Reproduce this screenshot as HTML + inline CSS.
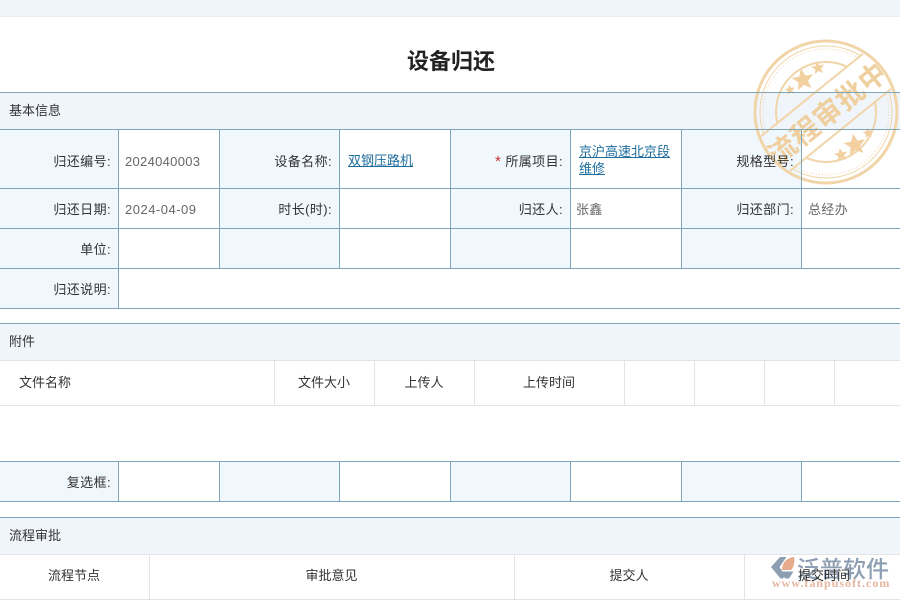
<!DOCTYPE html>
<html lang="zh"><head><meta charset="utf-8"><title>设备归还</title>
<style>
html,body{margin:0;padding:0;background:#fff}
#p{position:relative;width:900px;height:600px;overflow:hidden;background:#fff;font:13px/16px "Liberation Sans","Noto Sans CJK SC",sans-serif;color:#333}
#p div{position:absolute}
.b{background:#f0f7fd}
.s{background:#f0f5fc;left:0;width:900px}
.h{left:0;width:900px;height:1px;background:#7fa6b8}
.g{left:0;width:900px;height:1px;background:#e4e4e4}
.v{width:1px;background:#7fa6b8}
.w{width:1px;background:#e4e4e4}
.t,.r,.c,.d,.l{margin-top:1px}
.t{white-space:nowrap}
.r{white-space:nowrap;text-align:right;letter-spacing:.4px}
.c{white-space:nowrap;text-align:center}
.d{white-space:nowrap;color:#666;letter-spacing:.3px}
.l{color:#1d6d9c;text-decoration:underline;white-space:nowrap}
</style></head><body><div id="p">
<div class="s" style="top:0;height:16px"></div>
<div class="g" style="top:16px;background:#e8edf3"></div>
<div class="c" style="left:0;width:902px;top:46px;font-size:22px;line-height:30px;font-weight:bold;color:#222">设备归还</div>

<!-- basic section -->
<div class="s" style="top:93px;height:36px"></div>
<div class="t" style="left:9px;top:102px">基本信息</div>

<!-- label cell backgrounds -->
<div class="b" style="left:0;top:130px;width:118px;height:178px"></div>
<div class="b" style="left:220px;top:130px;width:119px;height:138px"></div>
<div class="b" style="left:451px;top:130px;width:119px;height:138px"></div>
<div class="b" style="left:682px;top:130px;width:119px;height:138px"></div>
<div class="b" style="left:0;top:462px;width:118px;height:39px"></div>
<div class="b" style="left:220px;top:462px;width:119px;height:39px"></div>
<div class="b" style="left:451px;top:462px;width:119px;height:39px"></div>
<div class="b" style="left:682px;top:462px;width:119px;height:39px"></div>

<!-- stamp (under the grid and labels) -->
<svg style="position:absolute;left:750px;top:32px" width="150" height="160" viewBox="0 0 150 160">
<defs>
<mask id="m" maskUnits="userSpaceOnUse" x="0" y="0" width="150" height="160">
<rect width="150" height="160" fill="#fff"/>
<rect x="-30" y="58" width="212" height="45" fill="#000" transform="rotate(-39 76 80)"/>
</mask>
<clipPath id="k"><circle cx="76" cy="80" r="69"/></clipPath>
</defs>
<circle cx="76" cy="80" r="71" fill="none" stroke="#f1d5a9" stroke-width="3"/>
<g fill="none" stroke="#f1d5a9" mask="url(#m)">
<circle cx="76" cy="80" r="66" stroke-width="1"/>
<circle cx="76" cy="80" r="63" stroke-width="1" stroke-dasharray="1 2"/>
<circle cx="76" cy="80" r="50" stroke-width="2"/>
</g>
<g clip-path="url(#k)">
<g transform="rotate(-39 76 80)">
<path d="M-30 58H180M-30 103H180" stroke="#f1d5a9" stroke-width="2" fill="none"/>
<text x="77" y="92" text-anchor="middle" font-family="'Noto Sans CJK SC',sans-serif" font-size="28" font-weight="bold" fill="#efcf9e" letter-spacing="1">流程审批中</text>
</g>
</g>
<g fill="#f2d0a0">
<path transform="translate(53 48) rotate(-10) scale(1.15)" d="M0-10L2.800-3.400H9.500L4.200 1.400 5.900 8.100 0 4.400-5.900 8.100-4.200 1.400-9.500-3.400H-2.800z"/>
<path transform="translate(68 36) rotate(-10) scale(.7)" d="M0-10L2.800-3.400H9.500L4.200 1.400 5.900 8.100 0 4.400-5.900 8.100-4.200 1.400-9.500-3.400H-2.800z"/>
<path transform="translate(40 58) rotate(-10) scale(.55)" d="M0-10L2.800-3.400H9.500L4.200 1.400 5.900 8.100 0 4.400-5.900 8.100-4.200 1.400-9.500-3.400H-2.800z"/>
<path transform="translate(105 113) rotate(-10) scale(1.15)" d="M0-10L2.800-3.400H9.500L4.200 1.400 5.900 8.100 0 4.400-5.900 8.100-4.200 1.400-9.500-3.400H-2.800z"/>
<path transform="translate(91 123) rotate(-10) scale(.7)" d="M0-10L2.800-3.400H9.500L4.200 1.400 5.900 8.100 0 4.400-5.900 8.100-4.200 1.400-9.500-3.400H-2.800z"/>
<path transform="translate(118 101) rotate(-10) scale(.55)" d="M0-10L2.800-3.400H9.500L4.200 1.400 5.900 8.100 0 4.400-5.900 8.100-4.200 1.400-9.500-3.400H-2.800z"/>
</g>
</svg>

<div class="h" style="top:92px"></div>
<div class="h" style="top:129px"></div>
<div class="h" style="top:188px"></div>
<div class="h" style="top:228px"></div>
<div class="h" style="top:268px"></div>
<div class="h" style="top:308px"></div>

<div class="v" style="left:118px;top:129px;height:180px"></div>
<div class="v" style="left:219px;top:129px;height:140px"></div>
<div class="v" style="left:339px;top:129px;height:140px"></div>
<div class="v" style="left:450px;top:129px;height:140px"></div>
<div class="v" style="left:570px;top:129px;height:140px"></div>
<div class="v" style="left:681px;top:129px;height:140px"></div>
<div class="v" style="left:801px;top:129px;height:140px"></div>

<div class="r" style="left:0;width:111px;top:153px">归还编号:</div>
<div class="d" style="left:125px;top:153px">2024040003</div>
<div class="r" style="left:220px;width:112px;top:153px">设备名称:</div>
<div class="l" style="left:348px;top:152px">双钢压路机</div>
<div class="r" style="left:451px;width:112px;top:153px"><span style="color:#c33;font-size:15px">*</span> 所属项目:</div>
<div class="l" style="left:579px;top:143px">京沪高速北京段</div>
<div class="l" style="left:579px;top:160px">维修</div>
<div class="r" style="left:682px;width:112px;top:153px">规格型号:</div>

<div class="r" style="left:0;width:111px;top:201px">归还日期:</div>
<div class="d" style="left:125px;top:201px;letter-spacing:.5px">2024-04-09</div>
<div class="r" style="left:220px;width:112px;top:201px">时长(时):</div>
<div class="r" style="left:451px;width:112px;top:201px">归还人:</div>
<div class="d" style="left:576px;top:201px">张鑫</div>
<div class="r" style="left:682px;width:112px;top:201px">归还部门:</div>
<div class="d" style="left:808px;top:201px">总经办</div>

<div class="r" style="left:0;width:111px;top:241px">单位:</div>
<div class="r" style="left:0;width:111px;top:281px">归还说明:</div>

<!-- attachments -->
<div class="s" style="top:324px;height:36px"></div>
<div class="h" style="top:323px"></div>
<div class="t" style="left:9px;top:333px">附件</div>
<div class="g" style="top:360px"></div>
<div class="g" style="top:405px"></div>
<div class="w" style="left:274px;top:360px;height:45px"></div>
<div class="w" style="left:374px;top:360px;height:45px"></div>
<div class="w" style="left:474px;top:360px;height:45px"></div>
<div class="w" style="left:624px;top:360px;height:45px"></div>
<div class="w" style="left:694px;top:360px;height:45px"></div>
<div class="w" style="left:764px;top:360px;height:45px"></div>
<div class="w" style="left:834px;top:360px;height:45px"></div>
<div class="t" style="left:19px;top:374px">文件名称</div>
<div class="c" style="left:274px;width:100px;top:374px">文件大小</div>
<div class="c" style="left:374px;width:100px;top:374px">上传人</div>
<div class="c" style="left:474px;width:150px;top:374px">上传时间</div>

<!-- checkbox row -->
<div class="h" style="top:461px"></div>
<div class="h" style="top:501px"></div>
<div class="v" style="left:118px;top:461px;height:40px"></div>
<div class="v" style="left:219px;top:461px;height:40px"></div>
<div class="v" style="left:339px;top:461px;height:40px"></div>
<div class="v" style="left:450px;top:461px;height:40px"></div>
<div class="v" style="left:570px;top:461px;height:40px"></div>
<div class="v" style="left:681px;top:461px;height:40px"></div>
<div class="v" style="left:801px;top:461px;height:40px"></div>
<div class="r" style="left:0;width:111px;top:474px">复选框:</div>

<!-- approval -->
<div class="s" style="top:518px;height:36px"></div>
<div class="h" style="top:517px"></div>
<div class="t" style="left:9px;top:527px">流程审批</div>
<div class="g" style="top:554px"></div>
<div class="g" style="top:599px"></div>
<div class="w" style="left:149px;top:554px;height:45px"></div>
<div class="w" style="left:514px;top:554px;height:45px"></div>
<div class="w" style="left:744px;top:554px;height:45px"></div>
<div class="c" style="left:0;width:148px;top:567px">流程节点</div>
<div class="c" style="left:149px;width:365px;top:567px">审批意见</div>
<div class="c" style="left:514px;width:230px;top:567px">提交人</div>

<!-- logo -->
<svg style="position:absolute;left:768px;top:552px" width="132" height="44" viewBox="0 0 132 44">
<path d="M3 15L12 5h6.500L11.500 15l6 9-3 2.500h-2z" fill="#8d9db2"/>
<path d="M14 18C14 11 18 6 26 5c1 5 0 10-3 13z" fill="#e5ab8c"/>
<path d="M14 19.500h11.500L21 26.500h-4z" fill="#8d9db2"/>
<text x="29" y="25" font-family="'Noto Sans CJK SC',sans-serif" font-size="23" font-weight="500" fill="#8d9db2">泛普软件</text>
<text x="4" y="35" font-family="'Liberation Serif',serif" font-size="12" font-weight="bold" fill="#e5b5a0" letter-spacing="1">www.fanpusoft.com</text>
</svg>
<div class="c" style="left:746px;width:156px;top:567px">提交时间</div>
</div></body></html>
